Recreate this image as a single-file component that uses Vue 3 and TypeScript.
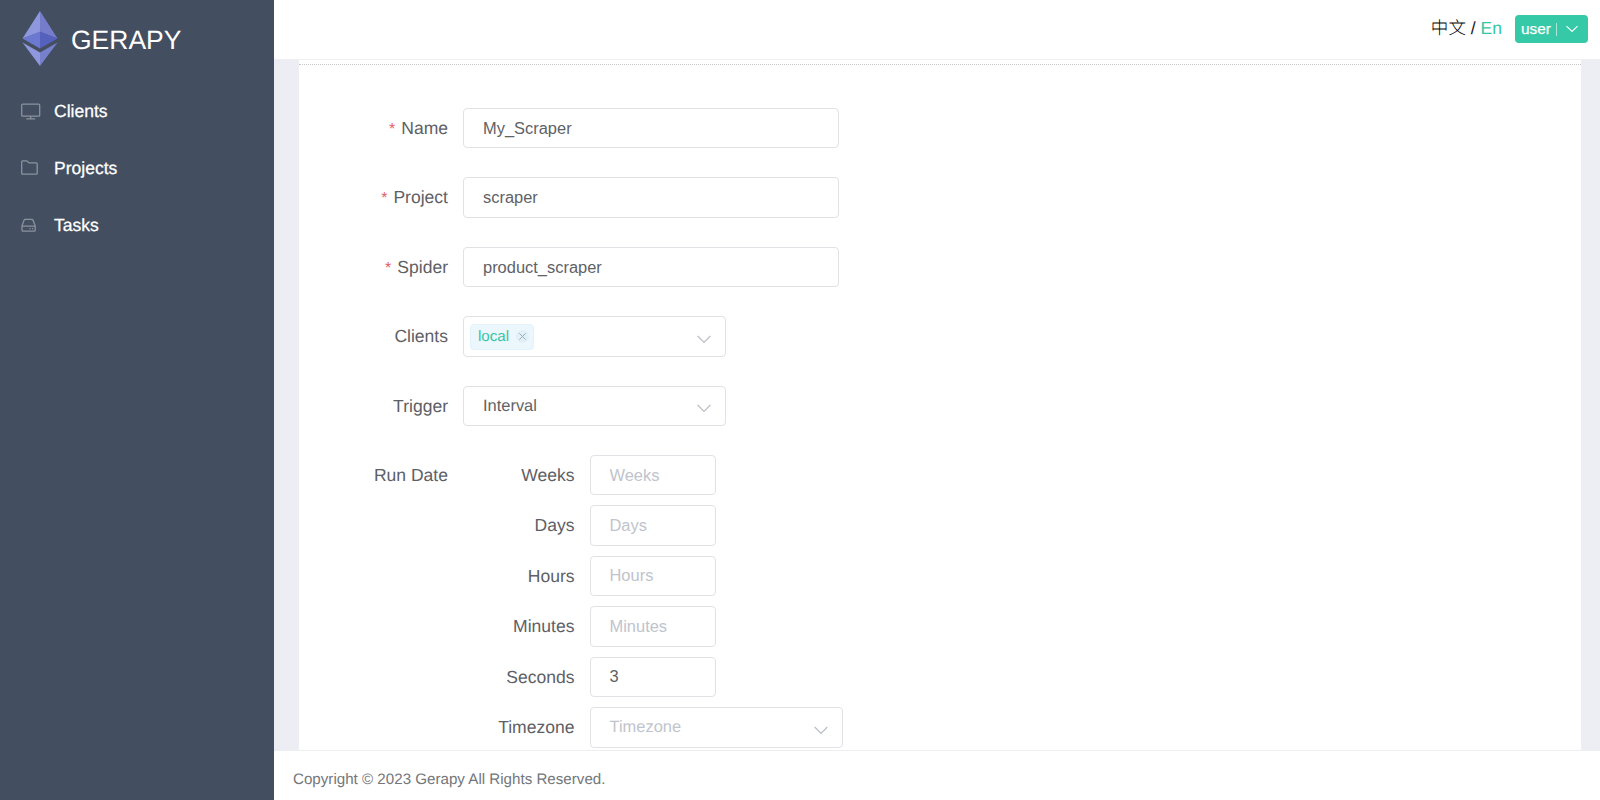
<script setup lang="ts">
import { reactive } from 'vue'

interface FormField {
  label: string
  value: string
}

const textFields = reactive<FormField[]>([
  { label: 'Name', value: 'My_Scraper' },
  { label: 'Project', value: 'scraper' },
  { label: 'Spider', value: 'product_scraper' },
])

const intervalFields = reactive<FormField[]>([
  { label: 'Weeks', value: '' },
  { label: 'Days', value: '' },
  { label: 'Hours', value: '' },
  { label: 'Minutes', value: '' },
  { label: 'Seconds', value: '3' },
])
</script>

<template>
  <div class="layout">
    <aside class="sidebar">
      <div class="brand">
        <svg class="logo" width="36" height="55" viewBox="0 0 36 55">
          <path d="M18 0 0.5 27.5 18 21z" fill="#8f98dc" />
          <path d="M18 0 35.5 27.5 18 21z" fill="#757dcb" />
          <path d="M0.5 27.5 18 20.5V37.5z" fill="#6c79d0" />
          <path d="M35.5 27.5 18 20.5V37.5z" fill="#5660bd" />
          <path d="M0.5 31.5 18 41.5V55z" fill="#8f98dc" />
          <path d="M35.5 31.5 18 41.5V55z" fill="#7680cc" />
        </svg>
        <span class="brand-name">GERAPY</span>
      </div>
      <nav class="menu">
        <a class="menu-item">
          <span class="menu-icon">
            <svg width="20" height="17" viewBox="0 0 20 17">
              <rect x="0.7" y="1.2" width="18" height="12" rx="1" />
              <path d="M9.7 13.2V15.6M5.3 15.8H14.2" />
            </svg>
          </span>
          Clients
        </a>
        <a class="menu-item">
          <span class="menu-icon">
            <svg width="18" height="17" viewBox="0 0 18 17">
              <path d="M0.7 13.3V1.7q0-.9.9-.9H5.8L8 2.9H15.3q.9 0 .9.9V13.3q0 .9-.9.9H1.6q-.9 0-.9-.9z" />
            </svg>
          </span>
          Projects
        </a>
        <a class="menu-item">
          <span class="menu-icon">
            <svg width="16" height="17" viewBox="0 0 16 17">
              <path d="M1 8.8 3.1 3.1q.2-.7.9-.7H11q.7 0 .9.7L14.2 8.8V13.2q0 .9-.9.9H1.9q-.9 0-.9-.9zM1 9.2H14.2M8.5 11.7H9.7M11 11.7H12.2" />
            </svg>
          </span>
          Tasks
        </a>
      </nav>
    </aside>

    <div class="main">
      <header class="header">
        <div class="lang"><span class="zh">中文</span> / <span class="lang-active">En</span></div>
        <button class="user">
          <span class="user-name">user</span>
          <span class="user-arrow">
            <svg width="14" height="8" viewBox="0 0 14 8"><path d="M1.5 1.2 7 6.4 12.5 1.2" /></svg>
          </span>
        </button>
      </header>

      <section class="content">
        <form class="panel" @submit.prevent>
          <div v-for="field in textFields" :key="field.label" class="row">
            <label class="label"><span class="required">*</span>{{ field.label }}</label>
            <input v-model="field.value" class="input wide" type="text" />
          </div>

          <div class="row">
            <label class="label">Clients</label>
            <div class="input select tags">
              <span class="tag">
                local
                <svg width="13" height="13" viewBox="0 0 13 13">
                  <circle cx="6.5" cy="6.5" r="6.5" fill="#e2eff6" />
                  <path d="M3.3 3.3 9.7 9.7M9.7 3.3 3.3 9.7" stroke="#92b0bd" />
                </svg>
              </span>
              <svg class="chevron" width="14" height="9" viewBox="0 0 14 9"><path d="M0.7 1 7 7.4 13.3 1" /></svg>
            </div>
          </div>

          <div class="row">
            <label class="label">Trigger</label>
            <div class="input select">
              <span>Interval</span>
              <svg class="chevron" width="14" height="9" viewBox="0 0 14 9"><path d="M0.7 1 7 7.4 13.3 1" /></svg>
            </div>
          </div>

          <div class="row">
            <label class="label">Run Date</label>
            <div class="interval">
              <div v-for="field in intervalFields" :key="field.label" class="sub-row">
                <label class="sub-label">{{ field.label }}</label>
                <input v-model="field.value" class="input small" type="text" :placeholder="field.label" />
              </div>
              <div class="sub-row">
                <label class="sub-label">Timezone</label>
                <div class="input select timezone">
                  <span class="placeholder">Timezone</span>
                  <svg class="chevron" width="14" height="9" viewBox="0 0 14 9"><path d="M0.7 1 7 7.4 13.3 1" /></svg>
                </div>
              </div>
            </div>
          </div>
        </form>
      </section>

      <footer class="footer">Copyright © 2023 Gerapy All Rights Reserved.</footer>
    </div>
  </div>
</template>

<style>
body {
  margin: 0;
  overflow: hidden;
}
</style>

<style scoped>
.layout,
.layout * {
  box-sizing: border-box;
}

.layout {
  display: flex;
  width: 1600px;
  height: 800px;
  font-family: "Liberation Sans", Arial, "Noto Sans CJK SC", sans-serif;
  font-size: 17.55px;
  color: #5e6065;
  text-rendering: geometricPrecision;
}

.sidebar {
  flex: none;
  width: 274px;
  background: #434f61;
  color: #fff;
}

.brand {
  display: flex;
  align-items: center;
  height: 83px;
  padding: 0 0 7px 22px;
}

.brand-name {
  margin: 3px 0 0 13px;
  font-size: 26.5px;
  line-height: 30px;
}

.menu-item {
  display: flex;
  align-items: center;
  height: 56.9px;
  padding-left: 21px;
  -webkit-text-stroke: 0.25px #fff;
}

.menu-icon {
  display: flex;
  width: 33px;
}

.menu-icon svg {
  fill: none;
  stroke: #8c929c;
  stroke-width: 1.3;
}

.main {
  flex: 1;
  display: flex;
  flex-direction: column;
  min-width: 0;
}

.header {
  flex: none;
  display: flex;
  justify-content: flex-end;
  height: 59px;
  padding: 15px 12px 0 0;
  background: #fff;
}

.lang {
  margin-right: 13px;
  line-height: 27px;
  color: #222;
}

.zh {
  color: #000;
  font-weight: 300;
}

.lang-active {
  color: #36c5a2;
}

.user {
  display: flex;
  align-items: center;
  width: 73px;
  height: 28px;
  padding: 0 0 0 6px;
  border: 0;
  border-radius: 4px;
  background: #36c9a7;
  color: #fff;
  font-family: inherit;
  font-size: 15.3px;
  -webkit-text-stroke: 0.25px #fff;
}

.user-name {
  width: 35px;
  text-align: left;
}

.user-arrow {
  display: flex;
  align-items: center;
  height: 13px;
  padding-left: 8px;
  border-left: 1px solid #a9e8d9;
}

.user-arrow svg {
  fill: none;
  stroke: #fff;
  stroke-width: 1.1;
}

.content {
  flex: 1;
  min-height: 0;
  padding: 0 19px 0 25px;
  overflow: hidden;
  border-top: 1px solid #eeeff2;
  background: #edeef3;
}

.panel {
  display: flex;
  flex-direction: column;
  gap: 29.4px;
  height: 100%;
  padding: 48px 0 0;
  background: #fff;
}

.panel::before {
  content: "";
  margin: -44px 0 -15.35px;
  padding-bottom: 29px;
  border-top: 1px dotted #c6c6c6;
}

.row {
  display: flex;
  align-items: flex-start;
  height: 40px;
}

.label,
.sub-label {
  flex: none;
  padding-right: 15px;
  line-height: 41px;
  text-align: right;
  white-space: nowrap;
}

.label {
  width: 164px;
}

.sub-label {
  width: 126.5px;
}

.required {
  margin-right: 6px;
  color: #e2606c;
  font-size: 16px;
}

.input {
  display: block;
  height: 40.4px;
  padding: 0 19px;
  border: 1px solid #e0e2e6;
  border-radius: 4px;
  outline: 0;
  background: #fff;
  color: #606266;
  font-family: inherit;
  font-size: 16.45px;
  line-height: 38px;
}

.input::placeholder,
.placeholder {
  color: #c0c4cc;
  opacity: 1;
}

.wide {
  width: 376px;
}

.small {
  width: 126px;
}

.select {
  display: flex;
  align-items: center;
  justify-content: space-between;
  width: 263px;
  padding-right: 14px;
}

.timezone {
  width: 253px;
  height: 41px;
}

.tags {
  padding-left: 6px;
}

.tag {
  display: flex;
  align-items: center;
  gap: 7px;
  height: 26px;
  margin-top: 1px;
  padding: 0 4px 0 7px;
  border: 1px solid #e4f3fb;
  border-radius: 4px;
  background: #ecf6fd;
  color: #36c5a2;
  font-size: 15.1px;
  line-height: 24px;
}

.chevron {
  margin-top: 6px;
  fill: none;
  stroke: #b9bdc5;
  stroke-width: 1.2;
}

.interval {
  display: flex;
  flex-direction: column;
  gap: 10px;
}

.sub-row {
  display: flex;
  height: 40.4px;
}

.footer {
  flex: none;
  height: 50px;
  padding-left: 19px;
  border-top: 1px solid #eceef1;
  background: #fff;
  color: #73767a;
  font-size: 15.15px;
  line-height: 57px;
}
</style>
